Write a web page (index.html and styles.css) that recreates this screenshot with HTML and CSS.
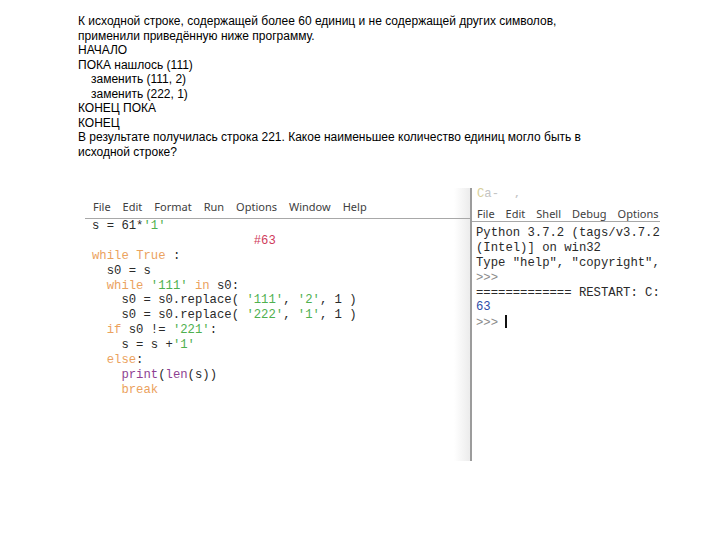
FILE: index.html
```html
<!DOCTYPE html>
<html lang="ru">
<head>
<meta charset="utf-8">
<title>Задача</title>
<link rel="stylesheet" href="styles.css">
</head>
<body>
<div class="page">
  <div class="task">
    <div>К исходной строке, содержащей более 60 единиц и не содержащей других символов,</div>
    <div>применили приведённую ниже программу.</div>
    <div>НАЧАЛО</div>
    <div>ПОКА нашлось (111)</div>
    <div class="ind">заменить (111, 2)</div>
    <div class="ind">заменить (222, 1)</div>
    <div>КОНЕЦ ПОКА</div>
    <div>КОНЕЦ</div>
    <div>В результате получилась строка 221. Какое наименьшее количество единиц могло быть в</div>
    <div>исходной строке?</div>
  </div>

  <div class="shot">
    <div class="editor">
      <div class="menu ed-menu">
        <span>File</span><span>Edit</span><span>Format</span><span>Run</span><span>Options</span><span>Window</span><span>Help</span>
      </div>
      <div class="code">
        <div>s = 61*<span class="str">'1'</span></div>
        <div>                      <span class="com">#63</span></div>
        <div><span class="kw">while</span> <span class="kw">True</span> :</div>
        <div>  s0 = s</div>
        <div>  <span class="kw">while</span> <span class="str">'111'</span> <span class="kw">in</span> s0:</div>
        <div>    s0 = s0.replace( <span class="str">'111'</span>, <span class="str">'2'</span>, 1 )</div>
        <div>    s0 = s0.replace( <span class="str">'222'</span>, <span class="str">'1'</span>, 1 )</div>
        <div>  <span class="kw">if</span> s0 != <span class="str">'221'</span>:</div>
        <div>    s = s +<span class="str">'1'</span></div>
        <div>  <span class="kw">else</span>:</div>
        <div>    <span class="bi">print</span>(<span class="bi">len</span>(s))</div>
        <div>    <span class="kw">break</span></div>
      </div>
    </div>
    <div class="divider"></div>
    <div class="shell">
      <div class="cut"><span class="cut-line"><span class="faint-y">C</span><span class="faint">a-  ,</span></span></div>
      <div class="menu sh-menu">
        <span>File</span><span>Edit</span><span>Shell</span><span>Debug</span><span>Options</span>
      </div>
      <div class="code sh-code">
        <div>Python 3.7.2 (tags/v3.7.2:9a3ffc0492, Dec 23 2018</div>
        <div>(Intel)] on win32</div>
        <div>Type "help", "copyright", "credits" or "license()"</div>
        <div class="prompt">&gt;&gt;&gt;</div>
        <div>============= RESTART: C:/Users/user/Desktop/1.py</div>
        <div class="out">63</div>
        <div><span class="prompt">&gt;&gt;&gt; </span><span class="caret"></span></div>
      </div>
    </div>
  </div>
</div>
</body>
</html>
```

FILE: styles.css
```css
html, body {
  margin: 0;
  padding: 0;
  background: #ffffff;
}

.page {
  width: 720px;
  height: 540px;
  overflow: hidden;
}

.task {
  padding: 14px 0 0 78px;
  font-family: "Liberation Sans", Arial, sans-serif;
  font-size: 12px;
  line-height: 14.5px;
  color: #000;
}

.task .ind {
  padding-left: 13px;
}

.shot {
  display: flex;
  margin: 29px 0 0 85px;
  width: 575px;
  height: 273px;
}

.editor {
  width: 385px;
  flex: none;
  background: linear-gradient(to right, #ffffff calc(100% - 16px), #ececec);
}

.menu {
  display: flex;
  font-family: "Noto Sans", "Open Sans", sans-serif;
  font-size: 11px;
  line-height: 14px;
  color: #404040;
  border-bottom: 1px solid #a8a8a8;
  white-space: nowrap;
}

.ed-menu {
  gap: 12px;
  padding: 12px 0 4px 8px;
}

.code {
  font-family: "Liberation Mono", "Courier New", monospace;
  font-size: 12.25px;
  line-height: 14.9px;
  color: #2a2a2a;
}

.code > div {
  white-space: pre;
  height: 14.9px;
}

.editor .code {
  padding-left: 7px;
}

.kw { color: #eba25e; }
.str { color: #4fb04f; }
.com { color: #cf3a5a; }
.bi { color: #8e3f92; }

.divider {
  width: 2px;
  flex: none;
  background: #9c9c9c;
}

.shell {
  flex: 1;
  overflow: hidden;
  white-space: nowrap;
  background: #ffffff;
}

.cut {
  height: 10px;
  overflow: hidden;
  display: flex;
  align-items: flex-end;
  padding-left: 5px;
}

.cut-line {
  font-family: "Liberation Mono", monospace;
  font-size: 12.25px;
  line-height: 14.9px;
  margin-bottom: -4px;
  white-space: pre;
}

.faint { color: #c4c4c4; }
.faint-y { color: #d8cf9a; }

.sh-menu {
  gap: 11px;
  padding: 9px 0 0 5px;
}

.sh-code {
  padding: 4px 0 0 4px;
}

.prompt { color: #8a8a8a; }
.out { color: #2c4ca8; }

.caret {
  display: inline-block;
  width: 2px;
  height: 13px;
  background: #111;
  vertical-align: -2px;
}
```
